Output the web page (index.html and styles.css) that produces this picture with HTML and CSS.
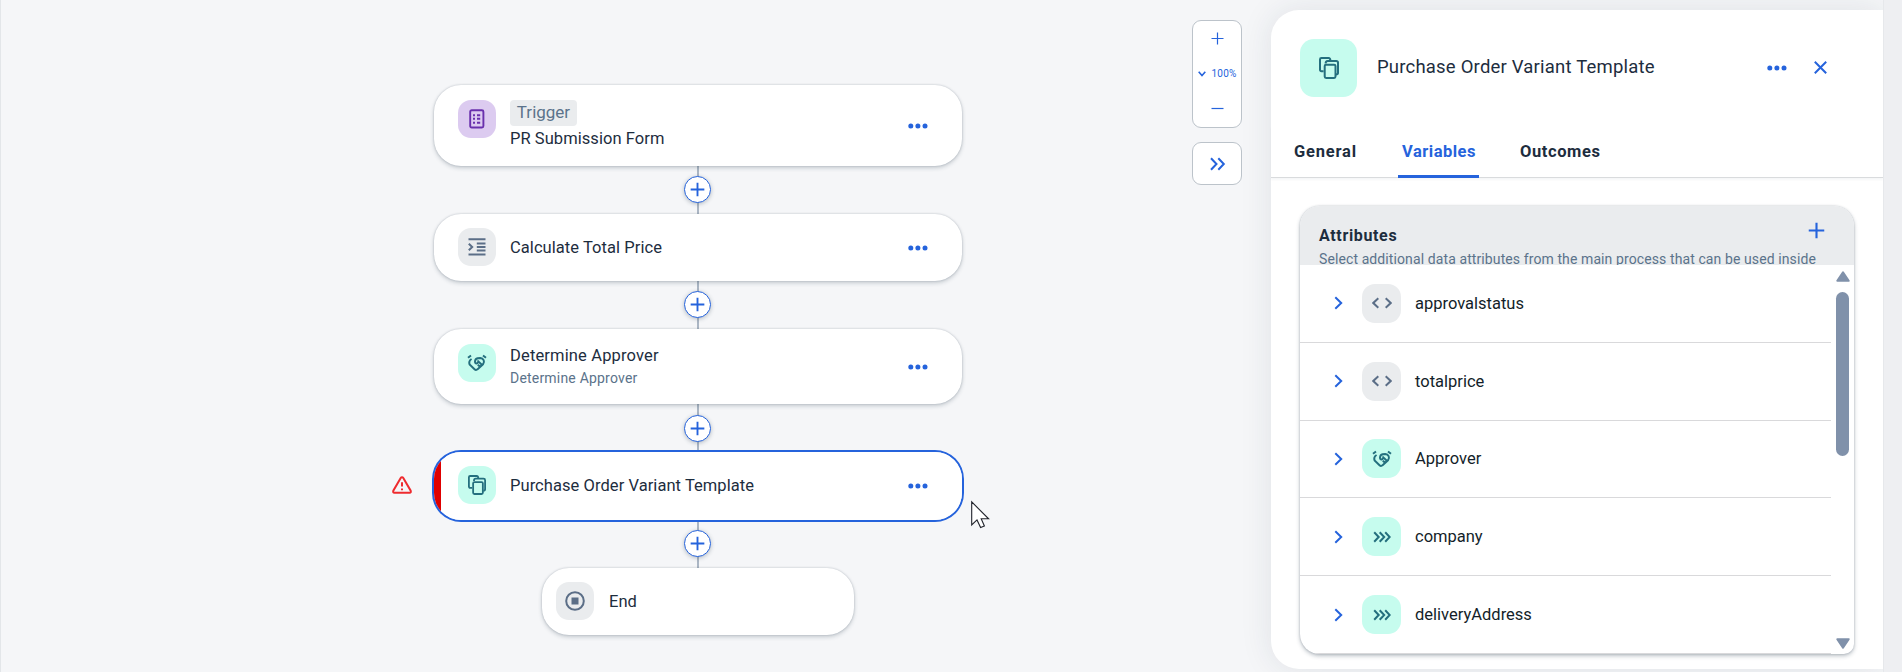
FILE: index.html
```html
<!DOCTYPE html>
<html lang="en">
<head>
<meta charset="utf-8">
<title>Process Editor</title>
<link rel="stylesheet" href="styles.css">
</head>
<body>
<svg class="defs" width="0" height="0">
  <symbol id="more" viewBox="0 0 20 6"><circle cx="2.8" cy="3" r="2.5"/><circle cx="9.9" cy="3" r="2.5"/><circle cx="17" cy="3" r="2.5"/></symbol>
  <symbol id="plus" viewBox="0 0 16 16"><path d="M8 .7v14.6M.7 8h14.6"/></symbol>
  <symbol id="copies" viewBox="0 0 20 22"><path d="M4.6 14.2H2.4A1.4 1.4 0 0 1 1 12.800V2.400A1.400 1.400 0 0 1 2.400 1H9.600Q11.300 1 11.400 3.600"/><path d="M6.600 6.500Q6.600 3.900 8.600 3.900H17.200Q19 3.900 19 5.600V15.800Q19 17.400 17 17.400"/><rect x="5.700" y="7.700" width="10.800" height="13.300" rx="1.400"/></symbol>
  <symbol id="shake" viewBox="0 0 20 18"><path d="M1 3.800 4 1.500M16 1.500 19 3.800M4.600 5C2.500 6.300 1.800 8.300 2.600 10.500L7.500 15.300Q9 16.500 10.600 15.300L16 10.300C18.300 7.500 16.300 4 13.300 4L10.500 4.300Q8.300 4.800 8 7.600C8 10.200 10.800 10 11.300 7.400L14.800 10.800M10.800 10.800 13.300 13"/></symbol>
  <symbol id="code" viewBox="0 0 20 12"><path d="M6.300 1.300 1.300 6 6.300 10.700M13.700 1.300 18.700 6 13.700 10.700"/></symbol>
  <symbol id="triple" viewBox="0 0 18 12"><path d="M1.200 1.300 5.700 6 1.200 10.700M6.700 1.300 11.200 6 6.700 10.700M12.200 1.300 16.700 6 12.200 10.700"/></symbol>
  <symbol id="chev" viewBox="0 0 9 14"><path d="M1.300 1.300 7.200 7 1.300 12.700"/></symbol>
</svg>
<div class="app">
  <main class="canvas">
    <div class="flow">
      <section class="card trigger">
        <span class="tile violet"><svg width="16" height="20" viewBox="0 0 16 20"><rect x="1.200" y="1.200" width="13.200" height="17.300" rx="1.500" stroke-width="1.900"/><path d="M4 6.200h2M8 6.200h3.200M4 9.700h2M8 9.700h3.200M4 13.700h2M8 13.700h3.200" stroke-width="2"/></svg></span>
        <div class="label"><span class="tag">Trigger</span><span class="name">PR Submission Form</span></div>
        <svg class="more"><use href="#more"/></svg>
      </section>
      <div class="link"><span class="add"><svg><use href="#plus"/></svg></span></div>
      <section class="card calc">
        <span class="tile grey"><svg width="18" height="18" viewBox="0 0 18 18"><path d="M.5 1.200h17M8.800 5.500h8.700M8.800 9h8.700M8.800 12.600h8.700M.5 16.600h17M.8 5.700 4.200 9 .8 12.300"/></svg></span>
        <div class="label"><span class="name">Calculate Total Price</span></div>
        <svg class="more"><use href="#more"/></svg>
      </section>
      <div class="link"><span class="add"><svg><use href="#plus"/></svg></span></div>
      <section class="card determine">
        <span class="tile teal"><svg width="20" height="18"><use href="#shake"/></svg></span>
        <div class="label"><span class="name">Determine Approver</span><span class="sub">Determine Approver</span></div>
        <svg class="more"><use href="#more"/></svg>
      </section>
      <div class="link low"><span class="add"><svg><use href="#plus"/></svg></span></div>
      <section class="card selected">
        <svg class="warning" viewBox="0 0 20 18"><path d="M10 1.200Q9.200 1.200 8.700 2L1.300 14.700Q.7 16.700 2.400 16.700H17.600Q19.300 16.700 18.700 14.700L11.300 2Q10.800 1.200 10 1.200ZM10 6.200V10.600M10 12.500V14.200"/></svg>
        <span class="tile teal"><svg width="18" height="20"><use href="#copies"/></svg></span>
        <div class="label"><span class="name">Purchase Order Variant Template</span></div>
        <svg class="more"><use href="#more"/></svg>
      </section>
      <div class="link"><span class="add"><svg><use href="#plus"/></svg></span></div>
      <section class="card end">
        <span class="tile grey"><svg width="20" height="20" viewBox="0 0 20 20"><circle cx="10" cy="10" r="8.800"/><rect x="6.500" y="6.500" width="7" height="7" fill="currentColor" stroke="none"/></svg></span>
        <div class="label"><span class="name">End</span></div>
      </section>
    </div>
    <svg class="cursor" viewBox="0 0 19 28"><path d="M.7.900V24L6 18.900 9.600 26.600 13.400 25 10.200 17.800H17.600Z"/></svg>
    <div class="tools">
      <div class="zoom">
        <svg width="13" height="13" viewBox="0 0 13 13"><path d="M6.500.5v12M.5 6.500h12"/></svg>
        <div class="level"><svg width="8" height="6" viewBox="0 0 8 6"><path d="M.7.800 4 4.500 7.300.800" stroke-width="1.600"/></svg><span>100%</span></div>
        <svg width="13" height="13" viewBox="0 0 13 13"><path d="M.5 6.500h12"/></svg>
      </div>
      <div class="expand"><svg width="15" height="14" viewBox="0 0 15 14"><path d="M1 1.200 6.500 7 1 12.800M8.300 1.200 13.800 7 8.300 12.800"/></svg></div>
    </div>
  </main>
  <aside class="panel">
    <header class="head">
      <span class="tile teal big"><svg width="20" height="22"><use href="#copies"/></svg></span>
      <h1>Purchase Order Variant Template</h1>
      <svg class="more"><use href="#more"/></svg>
      <svg class="close" viewBox="0 0 13 13"><path d="M.8.800 12.200 12.200M12.200.800.8 12.200"/></svg>
    </header>
    <nav class="tabs"><span class="t-gen">General</span><span class="active">Variables</span><span>Outcomes</span></nav>
    <div class="attrs">
      <div class="attrs-head">
        <div class="attrs-text"><h2>Attributes</h2><p>Select additional data attributes from the main process that can be used inside</p></div>
        <svg class="new"><use href="#plus"/></svg>
      </div>
      <div class="attrs-body">
        <ul class="rows">
          <li><svg class="chev"><use href="#chev"/></svg><span class="tile grey"><svg width="20" height="12"><use href="#code"/></svg></span><span>approvalstatus</span></li>
          <li><svg class="chev"><use href="#chev"/></svg><span class="tile grey"><svg width="20" height="12"><use href="#code"/></svg></span><span>totalprice</span></li>
          <li><svg class="chev"><use href="#chev"/></svg><span class="tile teal"><svg width="20" height="18"><use href="#shake"/></svg></span><span>Approver</span></li>
          <li><svg class="chev"><use href="#chev"/></svg><span class="tile teal"><svg width="18" height="12"><use href="#triple"/></svg></span><span>company</span></li>
          <li><svg class="chev"><use href="#chev"/></svg><span class="tile teal"><svg width="18" height="12"><use href="#triple"/></svg></span><span>deliveryAddress</span></li>
        </ul>
        <div class="scroll">
          <svg viewBox="0 0 14 11"><path d="M7 1.300 12.700 9.800H1.300Z"/></svg>
          <i class="thumb"></i>
          <svg class="down" viewBox="0 0 14 11"><path d="M7 9.700 12.700 1.200H1.300Z"/></svg>
        </div>
      </div>
    </div>
  </aside>
  <div class="gutter"></div>
</div>
</body>
</html>
```

FILE: styles.css
```css
* { box-sizing: border-box; }
body { margin: 0; font-family: Roboto, "Noto Sans", sans-serif; font-size: 16px; color: #1d2d3e; background: #f5f6f7; overflow: hidden; }
svg { fill: none; stroke: currentColor; stroke-width: 2; display: block; flex: none; overflow: visible; }
.defs { position: absolute; }
.app { display: flex; width: 1902px; height: 672px; overflow: hidden; background: #f5f6f8; }
.canvas { position: relative; display: flex; justify-content: space-between; width: 1271px; border-left: 1px solid #e3e6e9; flex: none; }

.flow { display: flex; flex-direction: column; align-items: center; width: 528px; margin-left: 433px; padding-top: 85px; }
.card { position: relative; display: flex; align-items: flex-start; width: 528px; flex: none; border-radius: 27px; background: #fff; padding: 14px 34px 0 24px; box-shadow: 0 0 2px rgba(34,53,72,.25), 0 2px 4px rgba(34,53,72,.22); }
.trigger { height: 81px; padding-top: 15px; }
.calc, .end { height: 67px; }
.determine { height: 75px; }
.selected { height: 68px; padding-top: 14px; box-shadow: 0 0 0 2px #2563dc; background: linear-gradient(90deg, #df0000 7px, #fff 7px); }
.end { width: 312px; padding-left: 14px; }
.tile { display: flex; align-items: center; justify-content: center; width: 38px; height: 38px; border-radius: 13px; flex: none; }
.violet { background: #dccbf0; color: #6930ad; }
.grey { background: #eaecee; color: #5b6e87; }
.teal { background: #c6fcee; color: #246f7e; }
.label { display: flex; flex-direction: column; align-items: flex-start; margin-left: 14px; flex: 1; height: 38px; justify-content: center; white-space: nowrap; }
.end .label { margin-left: 15px; }
.trigger .label { height: auto; justify-content: flex-start; }
.tag { width: 67px; height: 26px; border-radius: 4px; background: #eaecee; color: #5b738b; font-size: 17px; line-height: 25px; text-align: center; }
.name { font-size: 16.500px; line-height: 25px; letter-spacing: .06px; }
.determine .tile { margin-top: 0.5px; }
.determine .label { justify-content: flex-start; height: auto; }
.determine .name { letter-spacing: .15px; }
.sub { font-size: 14px; line-height: 21px; color: #5b738b; letter-spacing: .2px; }
.more { width: 20px; height: 6px; color: #2563dc; fill: currentColor; stroke: none; align-self: center; }
.card .more { margin-top: -14px; }
.trigger .more { margin-top: -15px; }
.selected .more { margin-top: -15px; }
.link { display: flex; align-items: center; justify-content: center; height: 48px; width: 2px; background: #abb6c4; }
.add { display: flex; align-items: center; justify-content: center; flex: none; width: 27px; height: 27px; margin: 0 1px 1px 0; border-radius: 50%; background: #fff; border: 1px solid #2563dc; color: #2563dc; box-shadow: 0 1px 4px rgba(34,53,72,.3); }
.low .add { margin: 1px 1px 0 0; }
.add svg { width: 15px; height: 15px; }
.warning { position: absolute; left: -42px; top: 24px; width: 20px; height: 18px; color: #ee2b2f; }
.cursor { position: absolute; left: 970px; top: 501px; width: 19px; height: 28px; fill: #fff; stroke: #20232b; stroke-width: 1.1; }

.tools { width: 50px; margin: 20px 29px 0 0; color: #2563dc; }
.zoom, .expand { display: flex; flex-direction: column; align-items: center; border: 1px solid #bcc3ca; border-radius: 9px; background: #fff; }
.zoom { height: 108px; padding: 11px 0 12px; justify-content: space-between; }
.zoom > svg { stroke-width: 1.200; }
.level { display: flex; align-items: center; gap: 6px; font-size: 10px; letter-spacing: .15px; }
.expand { margin-top: 14px; height: 43px; justify-content: center; }

.panel { position: relative; width: 612px; height: 659px; margin-top: 10px; flex: none; border-radius: 28px 0 0 28px; background: #fff; box-shadow: 0 0 32px rgba(34,53,72,.1); }
.head { display: flex; align-items: center; height: 116px; padding: 0 56px 1px 29px; }
.big { width: 57px; height: 58px; border-radius: 14px; }
h1 { flex: 1; margin: 0 0 2px 20px; font-size: 18.500px; letter-spacing: .2px; font-weight: 400; white-space: nowrap; }
.close { width: 13px; height: 13px; margin-left: 27px; color: #2563dc; }
.tabs { display: flex; height: 52px; padding-left: 23px; border-bottom: 1px solid #d9dbdd; box-shadow: 0 2px 2px rgba(34,53,72,.04); font-weight: 700; font-size: 16.500px; letter-spacing: .6px; line-height: 51px; }
.tabs span { white-space: nowrap; }
.tabs .t-gen { width: 63px; letter-spacing: .8px; }
.tabs .active { width: 81px; height: 52px; margin: 0 41px; padding-left: 1px; letter-spacing: .5px; text-align: center; color: #2563dc; border-bottom: 3px solid #2563dc; border-radius: 2px 2px 0 0; }
.attrs { margin: 28px 0 0 29px; width: 554px; height: 448px; border-radius: 20px 20px 10px 20px; background: #fff; overflow: hidden; box-shadow: 0 0 2px rgba(34,53,72,.25), 0 2px 4px rgba(34,53,72,.3); }
.attrs-head { display: flex; height: 59px; overflow: hidden; background: #eaecee; padding: 17px 29px 0 19px; }
.attrs-text { flex: 1; min-width: 0; white-space: nowrap; }
h2 { margin: 0; font-size: 16px; line-height: 25px; letter-spacing: .65px; }
p { margin: 0; font-size: 14px; line-height: 22px; color: #5b738b; letter-spacing: .1px; }
.new { width: 17px; height: 17px; margin: -1px 0 0 -17px; color: #2563dc; flex: none; }
.attrs-body { display: flex; }
.rows { list-style: none; margin: 0; padding: 0; width: 531px; color: #131e29; }
.rows li { display: flex; align-items: center; height: 77.800px; padding: 0 0 0 34px; border-bottom: 1px solid #d9d9db; }
.rows .tile { width: 39px; height: 39px; margin: 0 14px 0 19px; }
.rows span { font-size: 16.500px; }
.chev { width: 9px; height: 14px; color: #2563dc; }
.scroll { display: flex; flex-direction: column; align-items: center; width: 13px; height: 389px; margin-left: 5px; padding: 6px 0 5px; }
.scroll svg { width: 14px; height: 11px; fill: #8091aa; stroke: #8091aa; stroke-linejoin: round; }
.thumb { width: 13px; height: 164px; margin-top: 10px; border-radius: 7px; background: #8091aa; }
.scroll .down { margin-top: auto; }
.gutter { position: relative; flex: 1; background: #eeeff2; border-left: 1px solid #e6e8eb; }
```
